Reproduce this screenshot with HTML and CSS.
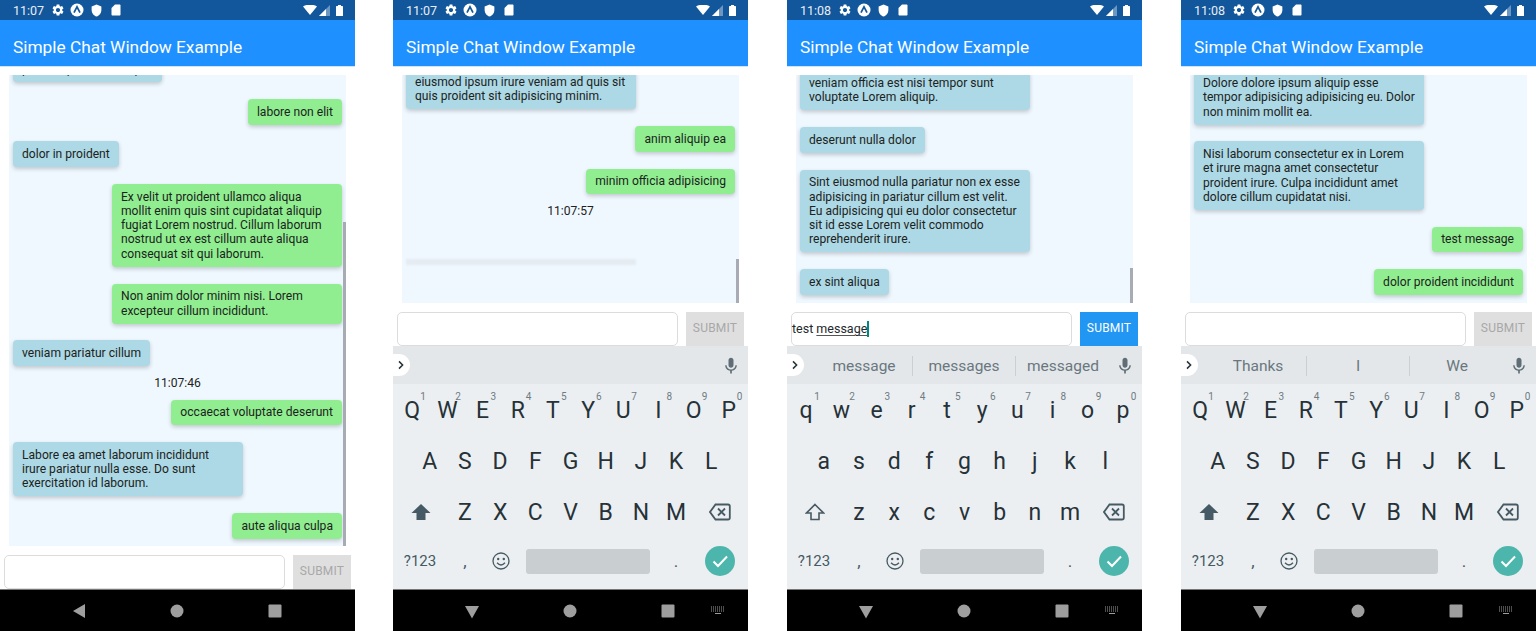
FILE: index.html
```html
<!DOCTYPE html>
<html lang="en">
<head>
<meta charset="utf-8">
<title>Simple Chat Window Example</title>
<link rel="stylesheet" href="styles.css">
</head>
<body>
<svg class="defs" aria-hidden="true">
  <symbol id="gear" viewBox="0 0 24 24"><path d="M19.14 12.94c.04-.3.06-.61.06-.94 0-.32-.02-.64-.07-.94l2.03-1.58c.18-.14.23-.41.12-.61l-1.92-3.32c-.12-.22-.37-.29-.59-.22l-2.39.96c-.5-.38-1.03-.7-1.62-.94l-.36-2.54c-.04-.24-.24-.41-.48-.41h-3.84c-.24 0-.43.17-.47.41l-.36 2.54c-.59.24-1.13.57-1.62.94l-2.39-.96c-.22-.08-.47 0-.59.22L2.74 8.87c-.12.21-.08.47.12.61l2.03 1.58c-.05.3-.09.63-.09.94s.02.64.07.94l-2.03 1.58c-.18.14-.23.41-.12.61l1.92 3.32c.12.22.37.29.59.22l2.39-.96c.5.38 1.03.7 1.62.94l.36 2.54c.05.24.24.41.48.41h3.84c.24 0 .44-.17.47-.41l.36-2.54c.59-.24 1.13-.56 1.62-.94l2.39.96c.22.08.47 0 .59-.22l1.92-3.32c.12-.22.07-.47-.12-.61l-2.01-1.58zM12 15.6c-1.98 0-3.6-1.62-3.6-3.6s1.62-3.6 3.6-3.6 3.6 1.62 3.6 3.6-1.62 3.6-3.6 3.6z" fill="#fff"/></symbol>
  <symbol id="atom" viewBox="0 0 14 14"><circle cx="7" cy="7" r="6.5" fill="#fff"/><path d="M4 9.6 7 3.8l3 5.8" fill="none" stroke="#12569b" stroke-width="1.7"/></symbol>
  <symbol id="shield" viewBox="0 0 24 24"><path d="M12 1 3 4.5v6.5c0 5.6 3.8 10.7 9 12 5.200-1.300 9-6.400 9-12V4.500z" fill="#fff"/></symbol>
  <symbol id="sd" viewBox="0 0 24 24"><path d="M19 1h-9L3 8v13c0 1.100.9 2 2 2h14c1.100 0 2-.9 2-2V3c0-1.100-.9-2-2-2z" fill="#fff"/></symbol>
  <symbol id="wifi" viewBox="0 0 14 10"><path d="M0 1.500C4-1 10-1 14 1.500L7 10z" fill="#fff"/></symbol>
  <symbol id="signal" viewBox="0 0 11 11"><path d="M0 11 11 0v11z" fill="#6d97c3"/><path d="M0 11 7 4v7z" fill="#fff"/></symbol>
  <symbol id="battery" viewBox="0 0 7 11"><path d="M2 0h3v1h1.300q.7 0 .7.700V11H0V1.700Q0 1 .7 1H2z" fill="#fff"/></symbol>
  <symbol id="mic" viewBox="0 0 24 24"><path d="M12 14c1.660 0 3-1.340 3-3V5c0-1.660-1.340-3-3-3S9 3.340 9 5v6c0 1.660 1.340 3 3 3zm5.300-3c0 3-2.540 5.100-5.300 5.100S6.700 14 6.700 11H5c0 3.410 2.720 6.230 6 6.720V21h2v-3.280c3.280-.48 6-3.300 6-6.720h-1.700z" fill="#5f6e76"/></symbol>
  <symbol id="chev" viewBox="0 0 10 12"><path d="M2.500 1.500 7 6l-4.500 4.500" fill="none" stroke="#263238" stroke-width="1.900"/></symbol>
  <symbol id="shift-fill" viewBox="0 0 20 18"><path d="M10 1 19.500 10H14.500V17H5.500V10H.5z" fill="#455a64"/></symbol>
  <symbol id="shift-line" viewBox="0 0 20 18"><path d="M10 1.500 18.500 10H14V16.500H6V10H1.500z" fill="none" stroke="#455a64" stroke-width="1.600"/></symbol>
  <symbol id="del" viewBox="0 0 22 18"><path d="M6.500 1.500H19q1.800 0 1.800 1.800v11.400q0 1.800-1.800 1.800H6.500L1 9z" fill="none" stroke="#455a64" stroke-width="1.800"/><path d="M9 5.500l7 7m0-7l-7 7" stroke="#455a64" stroke-width="1.800"/></symbol>
  <symbol id="smile" viewBox="0 0 18 18"><circle cx="9" cy="9" r="8" fill="none" stroke="#455a64" stroke-width="1.300"/><circle cx="6.200" cy="7" r="1.200" fill="#455a64"/><circle cx="11.800" cy="7" r="1.200" fill="#455a64"/><path d="M5 10.800q4 4.400 8 0" fill="none" stroke="#455a64" stroke-width="1.300"/></symbol>
  <symbol id="check" viewBox="0 0 30 30"><circle cx="15" cy="15" r="15" fill="#4db6ac"/><path d="M8.500 15.500 13 20l9-9.500" fill="none" stroke="#fff" stroke-width="2"/></symbol>
  <symbol id="back" viewBox="0 0 14 16"><path d="M13 1v14L1 8z" fill="#9e9e9e"/></symbol>
  <symbol id="down" viewBox="0 0 14 14"><path d="M0 1h14L7 13.500z" fill="#9e9e9e"/></symbol>
  <symbol id="home" viewBox="0 0 14 14"><circle cx="7" cy="7" r="6.500" fill="#9e9e9e"/></symbol>
  <symbol id="recent" viewBox="0 0 14 14"><rect x=".5" y=".5" width="13" height="13" rx="1" fill="#9e9e9e"/></symbol>
  <symbol id="kbd" viewBox="0 0 14 9"><path d="M0 1h14M0 3h14M0 5h14" fill="none" stroke="#9e9e9e" stroke-width="1" stroke-dasharray="1 1"/><path d="M4 7.500h6" fill="none" stroke="#9e9e9e" stroke-width="1"/></symbol>
</svg>

<main class="screens">

  <section class="phone">
    <div class="status">
      <span class="clock">11:07</span>
      <div class="status-icons">
        <svg class="ic-gear"><use href="#gear"/></svg><svg class="ic-atom"><use href="#atom"/></svg><svg class="ic-shield"><use href="#shield"/></svg><svg class="ic-sd"><use href="#sd"/></svg>
      </div>
      <div class="status-right">
        <svg class="ic-wifi"><use href="#wifi"/></svg><svg class="ic-signal"><use href="#signal"/></svg><svg class="ic-battery"><use href="#battery"/></svg>
      </div>
    </div>
    <header class="appbar">Simple Chat Window Example</header>
    <div class="body">
      <div class="list list-low">
        <div class="msg in">pariatur proident ad quis</div>
        <div class="msg out">labore non elit</div>
        <div class="msg in">dolor in proident</div>
        <div class="msg out">Ex velit ut proident ullamco aliqua mollit enim quis sint cupidatat aliquip fugiat Lorem nostrud. Cillum laborum nostrud ut ex est cillum aute aliqua consequat sit qui laborum.</div>
        <div class="msg out">Non anim dolor minim nisi. Lorem excepteur cillum incididunt.</div>
        <div class="msg in">veniam pariatur cillum</div>
        <div class="stamp">11:07:46</div>
        <div class="msg out">occaecat voluptate deserunt</div>
        <div class="msg in">Labore ea amet laborum incididunt irure pariatur nulla esse. Do sunt exercitation id laborum.</div>
        <div class="msg out">aute aliqua culpa</div>
        <div class="thumb thumb-a"></div>
      </div>
      <div class="composer">
        <div class="field"></div>
        <div class="submit">SUBMIT</div>
      </div>
    </div>
    <nav class="nav">
      <span class="nav-cell"><svg class="ic-back"><use href="#back"/></svg></span>
      <span class="nav-cell"><svg class="ic-nav"><use href="#home"/></svg></span>
      <span class="nav-cell"><svg class="ic-nav"><use href="#recent"/></svg></span>
    </nav>
  </section>

  <section class="phone">
    <div class="status">
      <span class="clock">11:07</span>
      <div class="status-icons">
        <svg class="ic-gear"><use href="#gear"/></svg><svg class="ic-atom"><use href="#atom"/></svg><svg class="ic-shield"><use href="#shield"/></svg><svg class="ic-sd"><use href="#sd"/></svg>
      </div>
      <div class="status-right">
        <svg class="ic-wifi"><use href="#wifi"/></svg><svg class="ic-signal"><use href="#signal"/></svg><svg class="ic-battery"><use href="#battery"/></svg>
      </div>
    </div>
    <header class="appbar">Simple Chat Window Example</header>
    <div class="body">
      <div class="list list-incoming">
        <div class="msg in">eiusmod ipsum irure veniam ad quis sit quis proident sit adipisicing minim.</div>
        <div class="msg out">anim aliquip ea</div>
        <div class="msg out">minim officia adipisicing</div>
        <div class="stamp">11:07:57</div>
        <div class="ghost"></div>
        <div class="thumb thumb-b"></div>
      </div>
      <div class="composer">
        <div class="field"></div>
        <div class="submit">SUBMIT</div>
      </div>
    </div>
    <div class="keyboard">
      <div class="suggest">
        <span class="pill"><svg class="ic-chev"><use href="#chev"/></svg></span>
        <span class="word word-a"></span><span class="word word-b"></span><span class="word word-c"></span>
        <svg class="ic-mic"><use href="#mic"/></svg>
      </div>
      <div class="row">
        <span class="key">Q<sup>1</sup></span><span class="key">W<sup>2</sup></span><span class="key">E<sup>3</sup></span><span class="key">R<sup>4</sup></span><span class="key">T<sup>5</sup></span><span class="key">Y<sup>6</sup></span><span class="key">U<sup>7</sup></span><span class="key">I<sup>8</sup></span><span class="key">O<sup>9</sup></span><span class="key">P<sup>0</sup></span>
      </div>
      <div class="row">
        <span class="key">A</span><span class="key">S</span><span class="key">D</span><span class="key">F</span><span class="key">G</span><span class="key">H</span><span class="key">J</span><span class="key">K</span><span class="key">L</span>
      </div>
      <div class="row">
        <span class="side"><svg class="ic-shift"><use href="#shift-fill"/></svg></span>
        <span class="key">Z</span><span class="key">X</span><span class="key">C</span><span class="key">V</span><span class="key">B</span><span class="key">N</span><span class="key">M</span>
        <span class="side"><svg class="ic-del"><use href="#del"/></svg></span>
      </div>
      <div class="row-bottom">
        <span class="sym">?123</span><span class="punct">,</span>
        <span class="emoji"><svg class="ic-smile"><use href="#smile"/></svg></span>
        <span class="space"></span><span class="punct period">.</span>
        <span class="enter"><svg class="ic-check"><use href="#check"/></svg></span>
      </div>
    </div>
    <nav class="nav">
      <span class="nav-cell"><svg class="ic-down"><use href="#down"/></svg></span>
      <span class="nav-cell"><svg class="ic-nav"><use href="#home"/></svg></span>
      <span class="nav-cell"><svg class="ic-nav"><use href="#recent"/></svg></span>
      <svg class="ic-kbd"><use href="#kbd"/></svg>
    </nav>
  </section>

  <section class="phone">
    <div class="status">
      <span class="clock">11:08</span>
      <div class="status-icons">
        <svg class="ic-gear"><use href="#gear"/></svg><svg class="ic-atom"><use href="#atom"/></svg><svg class="ic-shield"><use href="#shield"/></svg><svg class="ic-sd"><use href="#sd"/></svg>
      </div>
      <div class="status-right">
        <svg class="ic-wifi"><use href="#wifi"/></svg><svg class="ic-signal"><use href="#signal"/></svg><svg class="ic-battery"><use href="#battery"/></svg>
      </div>
    </div>
    <header class="appbar">Simple Chat Window Example</header>
    <div class="body">
      <div class="list">
        <div class="msg in">veniam officia est nisi tempor sunt voluptate Lorem aliquip.</div>
        <div class="msg in">deserunt nulla dolor</div>
        <div class="msg in">Sint eiusmod nulla pariatur non ex esse adipisicing in pariatur cillum est velit. Eu adipisicing qui eu dolor consectetur sit id esse Lorem velit commodo reprehenderit irure.</div>
        <div class="msg in">ex sint aliqua</div>
        <div class="thumb thumb-c"></div>
      </div>
      <div class="composer">
        <div class="field field-typed">test <u>message</u><i class="caret"></i></div>
        <div class="submit submit-on">SUBMIT</div>
      </div>
    </div>
    <div class="keyboard">
      <div class="suggest">
        <span class="pill"><svg class="ic-chev"><use href="#chev"/></svg></span>
        <span class="word word-a">message</span><span class="word word-b word-rule">messages</span><span class="word word-c word-rule">messaged</span>
        <svg class="ic-mic"><use href="#mic"/></svg>
      </div>
      <div class="row">
        <span class="key">q<sup>1</sup></span><span class="key">w<sup>2</sup></span><span class="key">e<sup>3</sup></span><span class="key">r<sup>4</sup></span><span class="key">t<sup>5</sup></span><span class="key">y<sup>6</sup></span><span class="key">u<sup>7</sup></span><span class="key">i<sup>8</sup></span><span class="key">o<sup>9</sup></span><span class="key">p<sup>0</sup></span>
      </div>
      <div class="row">
        <span class="key">a</span><span class="key">s</span><span class="key">d</span><span class="key">f</span><span class="key">g</span><span class="key">h</span><span class="key">j</span><span class="key">k</span><span class="key">l</span>
      </div>
      <div class="row">
        <span class="side"><svg class="ic-shift"><use href="#shift-line"/></svg></span>
        <span class="key">z</span><span class="key">x</span><span class="key">c</span><span class="key">v</span><span class="key">b</span><span class="key">n</span><span class="key">m</span>
        <span class="side"><svg class="ic-del"><use href="#del"/></svg></span>
      </div>
      <div class="row-bottom">
        <span class="sym">?123</span><span class="punct">,</span>
        <span class="emoji"><svg class="ic-smile"><use href="#smile"/></svg></span>
        <span class="space"></span><span class="punct period">.</span>
        <span class="enter"><svg class="ic-check"><use href="#check"/></svg></span>
      </div>
    </div>
    <nav class="nav">
      <span class="nav-cell"><svg class="ic-down"><use href="#down"/></svg></span>
      <span class="nav-cell"><svg class="ic-nav"><use href="#home"/></svg></span>
      <span class="nav-cell"><svg class="ic-nav"><use href="#recent"/></svg></span>
      <svg class="ic-kbd"><use href="#kbd"/></svg>
    </nav>
  </section>

  <section class="phone">
    <div class="status">
      <span class="clock">11:08</span>
      <div class="status-icons">
        <svg class="ic-gear"><use href="#gear"/></svg><svg class="ic-atom"><use href="#atom"/></svg><svg class="ic-shield"><use href="#shield"/></svg><svg class="ic-sd"><use href="#sd"/></svg>
      </div>
      <div class="status-right">
        <svg class="ic-wifi"><use href="#wifi"/></svg><svg class="ic-signal"><use href="#signal"/></svg><svg class="ic-battery"><use href="#battery"/></svg>
      </div>
    </div>
    <header class="appbar">Simple Chat Window Example</header>
    <div class="body">
      <div class="list">
        <div class="msg in">Dolore dolore ipsum aliquip esse tempor adipisicing adipisicing eu. Dolor non minim mollit ea.</div>
        <div class="msg in">Nisi laborum consectetur ex in Lorem et irure magna amet consectetur proident irure. Culpa incididunt amet dolore cillum cupidatat nisi.</div>
        <div class="msg out">test message</div>
        <div class="msg out">dolor proident incididunt</div>
      </div>
      <div class="composer">
        <div class="field"></div>
        <div class="submit">SUBMIT</div>
      </div>
    </div>
    <div class="keyboard">
      <div class="suggest">
        <span class="pill"><svg class="ic-chev"><use href="#chev"/></svg></span>
        <span class="word word-a">Thanks</span><span class="word word-b word-rule">I</span><span class="word word-c word-rule">We</span>
        <svg class="ic-mic"><use href="#mic"/></svg>
      </div>
      <div class="row">
        <span class="key">Q<sup>1</sup></span><span class="key">W<sup>2</sup></span><span class="key">E<sup>3</sup></span><span class="key">R<sup>4</sup></span><span class="key">T<sup>5</sup></span><span class="key">Y<sup>6</sup></span><span class="key">U<sup>7</sup></span><span class="key">I<sup>8</sup></span><span class="key">O<sup>9</sup></span><span class="key">P<sup>0</sup></span>
      </div>
      <div class="row">
        <span class="key">A</span><span class="key">S</span><span class="key">D</span><span class="key">F</span><span class="key">G</span><span class="key">H</span><span class="key">J</span><span class="key">K</span><span class="key">L</span>
      </div>
      <div class="row">
        <span class="side"><svg class="ic-shift"><use href="#shift-fill"/></svg></span>
        <span class="key">Z</span><span class="key">X</span><span class="key">C</span><span class="key">V</span><span class="key">B</span><span class="key">N</span><span class="key">M</span>
        <span class="side"><svg class="ic-del"><use href="#del"/></svg></span>
      </div>
      <div class="row-bottom">
        <span class="sym">?123</span><span class="punct">,</span>
        <span class="emoji"><svg class="ic-smile"><use href="#smile"/></svg></span>
        <span class="space"></span><span class="punct period">.</span>
        <span class="enter"><svg class="ic-check"><use href="#check"/></svg></span>
      </div>
    </div>
    <nav class="nav">
      <span class="nav-cell"><svg class="ic-down"><use href="#down"/></svg></span>
      <span class="nav-cell"><svg class="ic-nav"><use href="#home"/></svg></span>
      <span class="nav-cell"><svg class="ic-nav"><use href="#recent"/></svg></span>
      <svg class="ic-kbd"><use href="#kbd"/></svg>
    </nav>
  </section>

</main>
</body>
</html>
```
FILE: styles.css
```css
* { box-sizing: border-box; }
html, body { margin: 0; height: 100%; background: #fff; }
body { font-family: Roboto, "Liberation Sans", sans-serif; overflow: hidden; }
.defs { position: absolute; width: 0; height: 0; overflow: hidden; }
svg { display: block; flex: none; }

.screens { display: flex; gap: 39px; height: 631px; }
.phone { width: 355px; height: 631px; display: flex; flex-direction: column; background: #fff; }
.phone:first-child { margin-right: -1px; }

.status { height: 20px; flex: none; background: #12569b; color: #e8eef6; display: flex; align-items: center; padding: 0 12px 0 13px; }
.clock { font-size: 12.5px; width: 30px; }
.status-icons { display: flex; align-items: center; margin-left: 8px; gap: 5px; }
.status-right { display: flex; align-items: center; margin-left: auto; gap: 1px; }
.ic-gear { width: 14px; height: 14px; }
.ic-atom { width: 14px; height: 14px; }
.ic-shield { width: 13px; height: 13px; margin-left: 1px; }
.ic-sd { width: 12px; height: 14px; margin-left: 2px; }
.ic-wifi { width: 14px; height: 10px; }
.ic-signal { width: 11px; height: 11px; margin-left: 1px; }
.ic-battery { width: 7px; height: 11px; margin-left: 5px; }

.appbar { height: 47px; flex: none; background: #1e90ff; color: #fff; font-size: 17.3px; line-height: 34px; padding: 10px 0 0 13px; border-bottom: 1px solid #cfe5fb; }

.body { flex: 1; min-height: 0; display: flex; flex-direction: column; padding-top: 8px; }
.list { flex: 1; min-height: 0; margin: 0 9px; padding: 0 4px 8px; background: #f0f8ff; overflow: hidden; position: relative; display: flex; flex-direction: column; justify-content: flex-end; gap: 16.8px; }
.list-low { padding-bottom: 7px; }
.list-incoming { padding-bottom: 38px; }
.msg { flex: none; max-width: 230px; padding: 5.75px 9px; border-radius: 4px; font-size: 12.1px; line-height: 14.25px; color: #1c2320; box-shadow: 0 2px 4px rgba(0,0,0,.2); }
.in { align-self: flex-start; background: #add8e6; }
.out { align-self: flex-end; background: #90ee90; }
.stamp { flex: none; font-size: 12.1px; line-height: 14px; color: #1c2320; text-align: center; margin: -7px 0; }
.ghost { flex: none; width: 230px; height: 6px; margin-top: 31px; background: #e4ebf1; filter: blur(1px); }
.thumb { position: absolute; right: 0; bottom: 0; width: 3px; background: #a7abb3; }
.thumb-a { height: 324px; }
.thumb-b { height: 44px; }
.thumb-c { height: 35px; }

.composer { flex: none; height: 34px; margin-top: 9px; padding: 0 4px; display: flex; gap: 8px; }
.field { width: 281px; background: #fff; border: 1px solid #dcdcdc; border-radius: 5px; }
.field-typed { font-size: 12.5px; line-height: 32px; color: #22282b; display: flex; white-space: pre; }
.field-typed u { text-underline-offset: 2px; text-decoration-color: #555; }
.caret { width: 2px; height: 16px; margin-top: 8px; background: #00897b; }
.submit { width: 58px; height: 34px; background: #dfdfdf; color: #a8a8a8; font-size: 12px; letter-spacing: .2px; line-height: 32px; text-align: center; }
.submit-on { background: #2196f3; color: #fff; }

.keyboard { flex: none; height: 243px; background: #eceff1; }
.suggest { height: 38px; padding-top: 2px; background: #e3e7ea; display: flex; align-items: center; position: relative; padding-left: 29px; }
.pill { position: absolute; left: 0; top: 8px; width: 17px; height: 22px; background: #fff; border-radius: 0 11px 11px 0; display: flex; align-items: center; justify-content: center; }
.ic-chev { width: 8px; height: 10px; margin-right: 1px; }
.word { height: 20px; line-height: 20px; text-align: center; font-size: 15.5px; color: #6a777e; }
.word-a { width: 96px; }
.word-b { width: 103px; }
.word-c { width: 95px; }
.word-rule { border-left: 1px solid #c9cfd2; }
.ic-mic { width: 20px; height: 20px; margin-left: 5px; }

.row { height: 51px; display: flex; justify-content: center; align-items: center; }
.key { width: 35.2px; height: 51px; line-height: 53px; text-align: center; font-size: 23px; color: #263238; position: relative; }
.key sup { position: absolute; right: 4px; top: 7px; font-size: 10px; line-height: 12px; color: #6d7b83; }
.side { width: 53px; display: flex; justify-content: center; }
.ic-shift { width: 20px; height: 18px; }
.ic-del { width: 22px; height: 18px; }
.row-bottom { height: 52px; padding-bottom: 4px; display: flex; align-items: center; }
.sym { width: 54px; text-align: center; font-size: 15px; color: #455a64; }
.punct { width: 36px; text-align: center; font-size: 17px; color: #455a64; }
.emoji { width: 35px; display: flex; justify-content: center; }
.ic-smile { width: 18px; height: 18px; }
.space { width: 124px; height: 25px; margin-left: 8px; background: #c9ced1; border-radius: 3px; }
.period { margin-left: 8px; }
.enter { width: 54px; display: flex; justify-content: center; padding-right: 3px; }
.ic-check { width: 30px; height: 30px; }

.nav { flex: none; height: 42px; background: #000; border-top: 1px solid #777; display: flex; align-items: center; padding-left: 30px; }
.nav-cell { width: 98px; display: flex; justify-content: center; }
.ic-nav { width: 14px; height: 14px; }
.ic-back { width: 14px; height: 16px; }
.ic-down { width: 14px; height: 14px; margin-top: 3px; }
.ic-kbd { width: 14px; height: 9px; margin-left: -6px; }
```
